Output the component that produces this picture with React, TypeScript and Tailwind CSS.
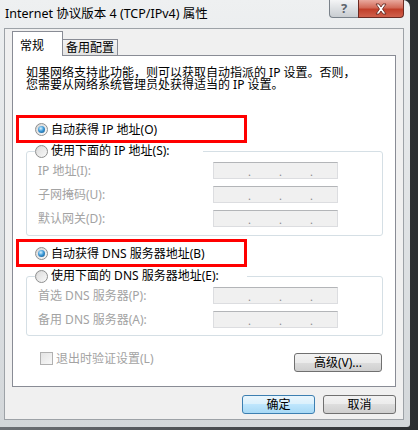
const cjk = "font-['Noto_Sans','Noto_Sans_CJK_SC',sans-serif]";

function Radio({ checked }: { checked?: boolean }) {
  return (
    <span className="flex w-[13px] h-[13px] shrink-0 items-center justify-center rounded-full border border-[#8e8f8f] bg-gradient-to-br from-[#d4d4d4] to-[#fbfbfb]">
      {checked ? (
        <span className="w-[7px] h-[7px] rounded-full bg-[radial-gradient(circle_at_40%_35%,#d8f3ff_0%,#3e9ad8_45%,#0c4a7c_100%)]" />
      ) : (
        <span className="w-[9px] h-[9px] rounded-full bg-gradient-to-br from-[#dedede] to-[#f6f6f6]" />
      )}
    </span>
  );
}

function IpBox() {
  return (
    <div className="flex h-[17px] w-[125px] items-end border border-[#dcdde0] border-t-[#b3b5b8] bg-[#f0f0f0] pl-[20px] text-[11px] leading-[13px] text-[#8a8a8a]">
      <span className="w-[31px] text-center">.</span>
      <span className="w-[31px] text-center">.</span>
      <span className="w-[31px] text-center">.</span>
    </div>
  );
}

function Row({ label }: { label: string }) {
  return (
    <div className="flex h-[17px] items-center">
      <span className="w-[186px] pl-[11px] text-[#a3a3a3]">{label}</span>
      <IpBox />
    </div>
  );
}

function Button({ label, focus, w }: { label: string; focus?: boolean; w: string }) {
  return (
    <div
      className={`${w} flex h-[19px] items-center justify-center rounded-[3px] border text-[12px] ${
        focus
          ? "border-[#3c7fb1] bg-[linear-gradient(#eaf6fd_0%,#d9f0fc_50%,#bee6fd_50%,#a7d9f5_100%)]"
          : "border-[#707070] bg-[linear-gradient(#f2f2f2_0%,#ebebeb_50%,#dddddd_50%,#cfcfcf_100%)]"
      }`}
    >
      {label}
    </div>
  );
}

export default function App() {
  return (
    <div className={`w-[418px] h-[430px] overflow-hidden bg-gradient-to-r from-[#6d7176] to-[#2b2e31] ${cjk}`}>
      <div className="flex h-[427px] w-[410px] flex-col rounded-tr-[7px] rounded-br-[3px] bg-[linear-gradient(#eef0f1,#e2e5e7_40%,#d3d7da)] pl-[4px] pr-[6px] pb-[7px]">
        {/* title bar */}
        <div className="flex h-[28px] items-start justify-between">
          <span className="pl-[1px] pt-[5px] text-[12.5px] leading-[18px] text-black">
            Internet 协议版本 4 (TCP/IPv4) 属性
          </span>
          <div className="flex h-[18px]">
            <div className="flex w-[29px] items-center justify-center rounded-bl-[4px] border border-r-0 border-t-0 border-[#7a828a] bg-[linear-gradient(#f4f5f6,#dde0e3_50%,#c9cdd1)] text-[13px] font-bold leading-none text-[#5d646c]">
              ?
            </div>
            <div className="flex w-[46px] items-center justify-center rounded-br-[4px] border border-t-0 border-[#6b2a22] bg-[linear-gradient(#e9a99e,#d26a58_45%,#c13f2a_55%,#d0604c)]">
              <svg width="14" height="12" viewBox="0 0 14 12">
                <path
                  d="M2 1h3l2 3 2-3h3L8.5 6 12 11H9L7 8l-2 3H2l3.5-5z"
                  fill="#fff"
                  stroke="#5a2018"
                  strokeWidth="0.8"
                  strokeLinejoin="round"
                />
              </svg>
            </div>
          </div>
        </div>

        {/* client area */}
        <div className="flex flex-1 flex-col border border-[#9da2a7] bg-[#f0f0f0] pt-[2px]">
          <div className="ml-[7px] flex items-end text-[12px] leading-[14px]">
            <div className="relative z-10 -mb-px flex h-[25px] w-[51px] items-start border border-b-0 border-[#898c95] bg-white pl-[7px] pt-[7px]">
              常规
            </div>
            <div className="-ml-px flex h-[16px] w-[56px] items-center justify-center border border-b-0 border-[#898c95] bg-[linear-gradient(#f3f3f3,#e3e3e3)] pt-[1px]">
              备用配置
            </div>
          </div>

          <div className="ml-[7px] flex h-[332px] w-[384px] flex-col border border-[#898c95] bg-white text-[12px] leading-[12px] text-black">
            <div className="pl-[13px] pt-[11px]">
              <div className="h-[12px]">如果网络支持此功能，则可以获取自动指派的 IP 设置。否则，</div>
              <div className="h-[12px]">您需要从网络系统管理员处获得适当的 IP 设置。</div>
            </div>

            <div className="ml-[3px] mt-[24px] flex h-[28px] w-[231px] items-center gap-[3px] border-[3px] border-[#ff0000] pl-[16px] pt-[1px]">
              <Radio checked />
              <span>自动获得 IP 地址(O)</span>
            </div>

            <fieldset className="ml-[13px] w-[357px] rounded-[3px] border border-[#d5dfe5] pb-[8px]">
              <legend className="ml-[8px] flex h-[16px] w-[168px] items-center gap-[3px] bg-white">
                <Radio />
                <span>使用下面的 IP 地址(S):</span>
              </legend>
              <div className="flex flex-col gap-[7px] pt-[3px]">
                <Row label="IP 地址(I):" />
                <Row label="子网掩码(U):" />
                <Row label="默认网关(D):" />
              </div>
            </fieldset>

            <div className="ml-[3px] mt-[3px] flex h-[28px] w-[231px] items-center gap-[3px] border-[3px] border-[#ff0000] pl-[16px] pt-[1px]">
              <Radio checked />
              <span>自动获得 DNS 服务器地址(B)</span>
            </div>

            <fieldset className="ml-[13px] mt-[1px] w-[357px] rounded-[3px] border border-[#d5dfe5] pb-[7px]">
              <legend className="ml-[8px] flex h-[16px] w-[212px] items-center gap-[3px] bg-white">
                <Radio />
                <span>使用下面的 DNS 服务器地址(E):</span>
              </legend>
              <div className="flex flex-col gap-[7px] pt-[3px]">
                <Row label="首选 DNS 服务器(P):" />
                <Row label="备用 DNS 服务器(A):" />
              </div>
            </fieldset>

            <div className="mt-[17px] flex items-start justify-between pl-[27px] pr-[13px]">
              <div className="-mt-px flex items-center gap-[3px] text-[#a3a3a3]">
                <span className="h-[13px] w-[13px] border border-[#b1b1b1] bg-gradient-to-br from-[#e4e4e4] to-[#f8f8f8]" />
                <span>退出时验证设置(L)</span>
              </div>
              <Button label="高级(V)..." w="w-[88px]" />
            </div>
          </div>

          <div className="mt-[8px] flex justify-end gap-[8px] pr-[7px]">
            <Button label="确定" focus w="w-[73px]" />
            <Button label="取消" w="w-[73px]" />
          </div>
        </div>
      </div>
    </div>
  );
}
